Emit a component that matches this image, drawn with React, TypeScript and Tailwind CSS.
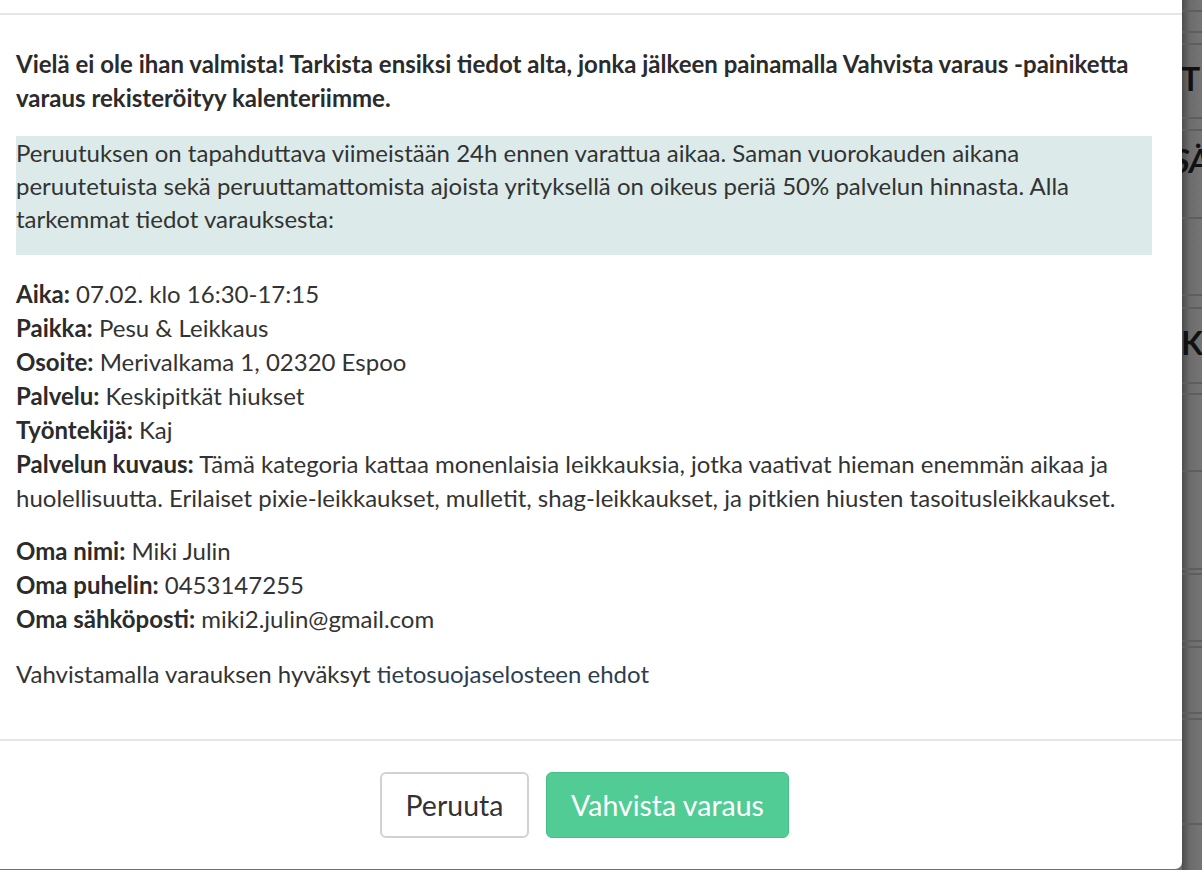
import React from 'react';

const details = [
  { label: 'Aika:', value: '07.02. klo 16:30-17:15' },
  { label: 'Paikka:', value: 'Pesu & Leikkaus' },
  { label: 'Osoite:', value: 'Merivalkama 1, 02320 Espoo' },
  { label: 'Palvelu:', value: 'Keskipitkät hiukset' },
  { label: 'Työntekijä:', value: 'Kaj' },
  {
    label: 'Palvelun kuvaus:',
    value:
      'Tämä kategoria kattaa monenlaisia leikkauksia, jotka vaativat hieman enemmän aikaa ja huolellisuutta. Erilaiset pixie-leikkaukset, mulletit, shag-leikkaukset, ja pitkien hiusten tasoitusleikkaukset.',
  },
];

const contact = [
  { label: 'Oma nimi:', value: 'Miki Julin' },
  { label: 'Oma puhelin:', value: '0453147255' },
  { label: 'Oma sähköposti:', value: 'miki2.julin@gmail.com' },
];

// y positions of the table rows showing through the overlay
const bgLines = [10, 31, 43, 117, 129, 217, 294, 307, 382, 393, 470, 568, 573, 640, 646, 712, 718, 823];

function InfoRow({ label, value }: { label: string; value: string }) {
  return (
    <div>
      <span className="font-bold text-[#2b2b2b]">{label}</span> {value}
    </div>
  );
}

export default function App() {
  return (
    <div className="flex h-[870px] w-[1202px] overflow-hidden bg-[#6f6f6f] font-['Lato','Liberation_Sans',sans-serif] text-[24px] text-[#333]">
      {/* Modal */}
      <div className="flex h-[869px] w-[1182px] shrink-0 flex-col rounded-br-[7px] bg-white">
        <div className="h-[13px] shrink-0" />
        <div className="h-[2px] shrink-0 bg-[#e6e6e6]" />

        <div className="flex-1 pl-4 pr-[30px] pt-[32px]">
          <p className="font-bold leading-[34px] text-[#2b2b2b]">
            Vielä ei ole ihan valmista! Tarkista ensiksi tiedot alta, jonka jälkeen painamalla Vahvista varaus -painiketta
            varaus rekisteröityy kalenteriimme.
          </p>

          <div className="mt-[21px] bg-[#dcebea] pb-[20px] leading-[33px]">
            Peruutuksen on tapahduttava viimeistään 24h ennen varattua aikaa. Saman vuorokauden aikana peruutetuista
            sekä peruuttamattomista ajoista yrityksellä on oikeus periä 50% palvelun hinnasta. Alla tarkemmat tiedot
            varauksesta:
          </div>

          <div className="mt-[22px] leading-[34px]">
            {details.map((d) => (
              <InfoRow key={d.label} {...d} />
            ))}
          </div>

          <div className="mt-[19px] leading-[34px]">
            {contact.map((d) => (
              <InfoRow key={d.label} {...d} />
            ))}
          </div>

          <p className="mt-[21px] leading-[34px]">
            Vahvistamalla varauksen hyväksyt <a className="text-[#2c3e50]">tietosuojaselosteen ehdot</a>
          </p>
        </div>

        <div className="h-[2px] shrink-0 bg-[#e6e6e6]" />
        <div className="flex h-[128px] shrink-0 items-start justify-center gap-[17px] pr-[13px] pt-[31px]">
          <button className="h-[66px] w-[149px] rounded-[6px] border-2 border-[#d2d2d2] bg-white text-[28.5px] text-[#333]">
            Peruuta
          </button>
          <button className="h-[66px] w-[243px] rounded-[6px] border border-[#47bd87] bg-[#51cc95] text-[28.5px] text-white">
            Vahvista varaus
          </button>
        </div>
      </div>

      {/* Page behind the overlay */}
      <div className="relative flex-1 overflow-hidden bg-linear-to-r from-[#4d4d4d] via-[#6c6c6c] via-40% to-[#757575]">
        {bgLines.map((y) => (
          <div key={y} className="absolute left-0 right-0 h-[2px] bg-[#5e5e5e]" style={{ top: y }} />
        ))}
        <span className="absolute left-[-1px] top-[60px] text-[32px] font-bold leading-[38px] text-[#111]">T</span>
        <span className="absolute left-[-9px] top-[142px] text-[32px] font-bold italic leading-[38px] text-[#111]">SÄ</span>
        <span className="absolute left-[-1px] top-[324px] text-[32px] font-bold leading-[38px] text-[#111]">K</span>
      </div>
    </div>
  );
}
